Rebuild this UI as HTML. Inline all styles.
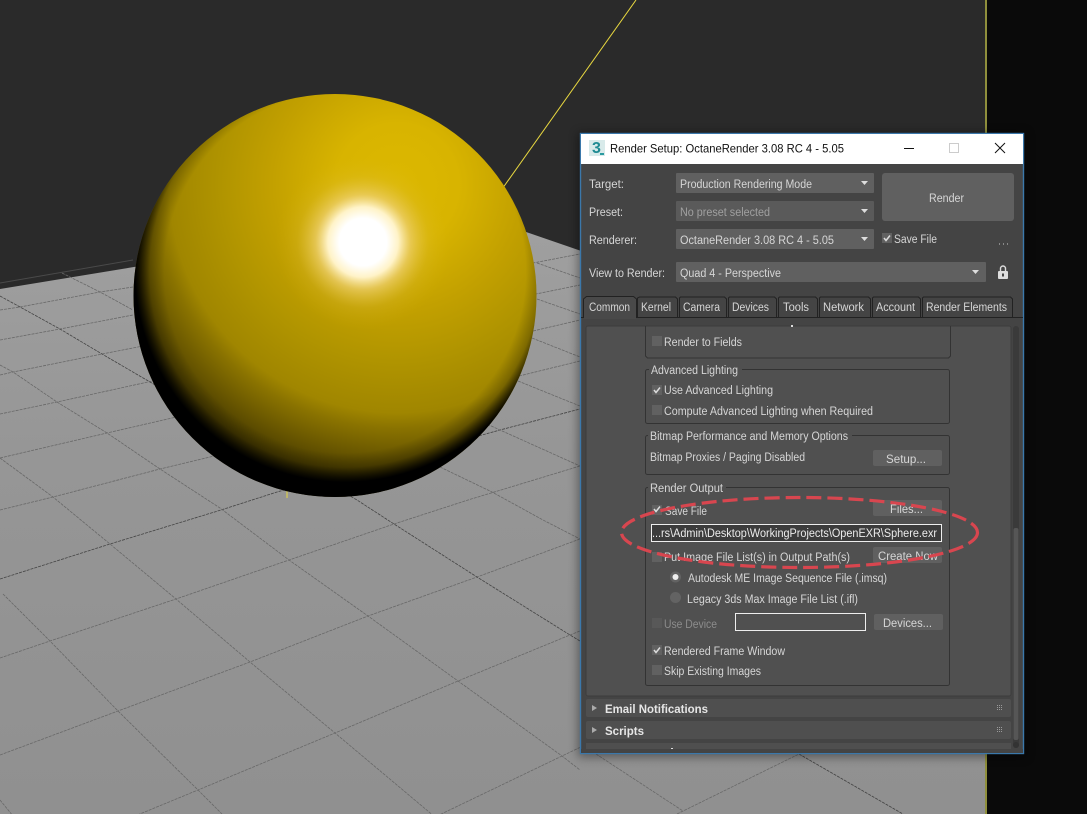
<!DOCTYPE html>
<html><head><meta charset="utf-8"><style>
html,body{margin:0;padding:0;background:#0a0a0a;width:1087px;height:814px;overflow:hidden}
svg{display:block}
text{font-family:"Liberation Sans",sans-serif;font-size:11.5px;fill:#d6d6d6}
.b{font-weight:bold;fill:#e6e6e6}
.g{fill:#a0a0a0}
.k{fill:#111;font-size:12px}
.u{fill:none;stroke:#686868;stroke-width:.8;stroke-dasharray:3 1}
.d{fill:none;stroke:#444;stroke-width:.8;stroke-dasharray:3 1}
.grp{fill:none;stroke:#333;stroke-width:1}
.cb{fill:#616161}
.btn{fill:#606060}
.rl{fill:#4f4f4f}
</style></head><body>
<svg width="1087" height="814" viewBox="0 0 1087 814" xmlns="http://www.w3.org/2000/svg">
<defs>
<radialGradient id="base" gradientUnits="userSpaceOnUse" cx="397" cy="185" r="340">
<stop offset="0" stop-color="#dcb800"/><stop offset=".18" stop-color="#d8b400"/><stop offset=".37" stop-color="#c2a000"/><stop offset=".52" stop-color="#b09400"/><stop offset=".67" stop-color="#a08600"/><stop offset=".715" stop-color="#8a7300"/><stop offset=".8" stop-color="#685600"/><stop offset=".88" stop-color="#463a00"/><stop offset="1" stop-color="#2c2400"/>
</radialGradient>
<radialGradient id="edge" gradientUnits="userSpaceOnUse" cx="345" cy="272" r="210">
<stop offset=".86" stop-color="#000" stop-opacity="0"/><stop offset=".93" stop-color="#000" stop-opacity=".25"/><stop offset=".98" stop-color="#000" stop-opacity=".8"/><stop offset="1" stop-color="#000" stop-opacity="1"/>
</radialGradient>
<radialGradient id="spec" gradientUnits="userSpaceOnUse" cx="363" cy="242" r="88">
<stop offset="0" stop-color="#fff"/><stop offset=".27" stop-color="#fff"/><stop offset=".4" stop-color="#fff3c8"/><stop offset=".54" stop-color="#eed070" stop-opacity=".72"/><stop offset=".75" stop-color="#e0c040" stop-opacity=".2"/><stop offset="1" stop-color="#d8b400" stop-opacity="0"/>
</radialGradient>
<linearGradient id="floor" x1="0" y1="0" x2="0" y2="1">
<stop offset="0" stop-color="#a0a0a0"/><stop offset=".4" stop-color="#969696"/><stop offset="1" stop-color="#909090"/>
</linearGradient>
<filter id="sh" x="-10%" y="-10%" width="120%" height="120%"><feGaussianBlur stdDeviation="5"/></filter>
</defs>

<!-- viewport -->
<rect width="1087" height="814" fill="#0a0a0a"/>
<rect width="985" height="814" fill="#2a2a2a"/>
<polygon points="0,289 468,212 985,390 985,814 0,814" fill="url(#floor)"/>
<line x1="0" y1="283" x2="133" y2="260" stroke="#4a4a4a" stroke-width="1"/>
<rect x="985" y="0" width="2" height="814" fill="#8f8f3c"/>
<line x1="636" y1="0" x2="500" y2="192" stroke="#e8d840" stroke-width="1"/>

<!-- grid: up-right -->
<polyline class="u" points="0,310 20,307 100,292 133,287"/>
<polyline class="u" points="0,340 60,329 133,315"/>
<polyline class="u" points="0,375 13,372 102,354 138,347 533,263 580,254"/>
<polyline class="u" points="0,414 57,402 148,382 536,294 580,285"/>
<polyline class="u" points="0,458 107,433 172,418 533,331 580,320"/>
<polyline class="u" points="0,510 53,497 160,469 210,457 519,376 580,361"/>
<polyline class="d" points="0,579 110,544 221,510 277,492 500,430 580,409"/>
<polyline class="u" points="0,658 50,641 176,599 289,560 394,524 468,500 580,466"/>
<polyline class="u" points="0,755 118,711 250,662 368,616 477,577 580,539"/>
<polyline class="u" points="60,847 198,790 335,733 458,681 570,635 585,629"/>
<polyline class="u" points="368,848 435,817 562,756 585,745"/>
<polyline class="u" points="677,814 799,754"/>
<!-- grid: down-right -->
<polyline class="u" points="62,273 100,292 133,310"/>
<polyline class="d" points="0,296 20,307 60,329 102,354 150,382 357,500 394,524 477,577 570,635 585,644"/>
<polyline class="u" points="0,365 13,372 57,402 107,433 160,469 220,508 289,560 368,616 458,681 562,756 580,770"/>
<polyline class="u" points="0,458 53,497 110,544 176,599 250,662 335,733 435,817"/>
<polyline class="u" points="3,594 50,641 118,711 198,790 222,814"/>
<polyline class="u" points="0,800 39,848"/>
<polyline class="u" points="537,263 580,278"/>
<polyline class="u" points="537,299 580,314"/>
<polyline class="u" points="532,338 580,357"/>
<polyline class="u" points="518,381 580,406"/>
<polyline class="u" points="480,421 500,430 580,466"/>
<polyline class="u" points="440,467 492,492 543,520 580,539"/>
<polyline class="u" points="596,754 683,811"/>
<polyline class="d" points="799,754 903,814"/>
<line x1="287" y1="491" x2="287" y2="498" stroke="#e8d840" stroke-width="1"/>

<!-- sphere -->
<circle cx="335" cy="295.500" r="201.500" fill="url(#base)"/>
<circle cx="335" cy="295.500" r="201.500" fill="url(#edge)"/>
<circle cx="363" cy="242" r="88" fill="url(#spec)"/>

<!-- dialog shadow -->
<rect x="578" y="133" width="448" height="624" fill="#000" opacity=".4" filter="url(#sh)"/>

<!-- dialog -->
<rect x="580.500" y="133.500" width="443" height="620" fill="#444" stroke="#3b78ab" stroke-width="1.400"/>
<rect x="581" y="134" width="442" height="30" fill="#fff"/>
<!-- app icon -->
<rect x="589" y="140" width="16" height="16" fill="#d8eaea"/>
<text x="592" y="153" style="font-size:16px;font-weight:bold;fill:#1e8a92">3</text>
<rect x="600" y="153" width="4" height="2" fill="#2a9aa0"/>
<text class="k" x="610" y="152.500" textLength="234" lengthAdjust="spacingAndGlyphs">Render Setup: OctaneRender 3.08 RC 4 - 5.05</text>
<line x1="904" y1="148.500" x2="914" y2="148.500" stroke="#111"/>
<rect x="949.500" y="143.500" width="9" height="9" fill="none" stroke="#ccc"/>
<path d="M995 143 L1005 153 M1005 143 L995 153" stroke="#111" stroke-width="1" fill="none"/>

<!-- top controls -->
<text x="589" y="188" textLength="35" lengthAdjust="spacingAndGlyphs">Target:</text>
<text x="589" y="216" textLength="34" lengthAdjust="spacingAndGlyphs">Preset:</text>
<text x="589" y="244" textLength="48" lengthAdjust="spacingAndGlyphs">Renderer:</text>
<text x="589" y="277" textLength="76" lengthAdjust="spacingAndGlyphs">View to Render:</text>

<rect class="btn" x="676" y="173" width="198" height="20" rx="1"/>
<rect x="676" y="201" width="198" height="20" rx="1" fill="#5a5a5a"/>
<rect class="btn" x="676" y="229" width="198" height="20" rx="1"/>
<rect class="btn" x="676" y="262" width="310" height="20" rx="1"/>
<text x="680" y="188" textLength="132" lengthAdjust="spacingAndGlyphs">Production Rendering Mode</text>
<text class="g" x="680" y="216" textLength="90" lengthAdjust="spacingAndGlyphs">No preset selected</text>
<text x="680" y="244" textLength="154" lengthAdjust="spacingAndGlyphs">OctaneRender 3.08 RC 4 - 5.05</text>
<text x="680" y="277" textLength="101" lengthAdjust="spacingAndGlyphs">Quad 4 - Perspective</text>
<path d="M861 181h7l-3.500 4z M861 209h7l-3.500 4z M861 237h7l-3.500 4z M972 270h7l-3.500 4z" fill="#ddd"/>

<rect class="btn" x="882" y="173" width="132" height="48" rx="3"/>
<text x="929" y="202" textLength="35" lengthAdjust="spacingAndGlyphs">Render</text>
<rect class="cb" x="882" y="233" width="10" height="10"/>
<path d="M884 238l2 2.500 4-5" stroke="#dcdcdc" stroke-width="1.500" fill="none"/>
<text x="894" y="243" textLength="43" lengthAdjust="spacingAndGlyphs">Save File</text>
<path d="M999 244h1M1003 244h1M1007 244h1" stroke="#ccc" stroke-width="1" fill="none"/>
<!-- lock -->
<path d="M1000.500 271v-2.500a2.500 2.500 0 0 1 5 0v2.500" stroke="#ddd" stroke-width="1.400" fill="none"/>
<rect x="998" y="271" width="10" height="8" rx="1" fill="#ddd"/>
<rect x="1002" y="273.500" width="2" height="3" fill="#444"/>

<!-- tabs -->
<line x1="581" y1="317.500" x2="1023" y2="317.500" stroke="#222"/>
<g fill="#444" stroke="#222" stroke-width="1">
<path d="M637.500 317v-19l2-1h36l2 2v18"/>
<path d="M679.500 317v-19l1-1h44l2 2v18"/>
<path d="M728.500 317v-19l1-1h45l2 2v18"/>
<path d="M778.500 317v-19l1-1h36l2 2v18"/>
<path d="M819.500 317v-19l1-1h48l2 2v18"/>
<path d="M872.500 317v-19l1-1h45l2 2v18"/>
<path d="M922.500 317v-19l1-1h87l2 2v18"/>
<path d="M583.500 318v-19l3-2.500h47l3 2.500v19" fill="#494949"/>
</g>
<rect x="584" y="316" width="52" height="3" fill="#494949"/>
<text x="589" y="311" textLength="41" lengthAdjust="spacingAndGlyphs">Common</text>
<text x="641" y="311" textLength="30" lengthAdjust="spacingAndGlyphs">Kernel</text>
<text x="683" y="311" textLength="37" lengthAdjust="spacingAndGlyphs">Camera</text>
<text x="732" y="311" textLength="37" lengthAdjust="spacingAndGlyphs">Devices</text>
<text x="783" y="311" textLength="26" lengthAdjust="spacingAndGlyphs">Tools</text>
<text x="823" y="311" textLength="41" lengthAdjust="spacingAndGlyphs">Network</text>
<text x="876" y="311" textLength="39" lengthAdjust="spacingAndGlyphs">Account</text>
<text x="926" y="311" textLength="81" lengthAdjust="spacingAndGlyphs">Render Elements</text>

<!-- content panel -->
<rect x="586" y="326" width="425" height="370" rx="2" fill="#505050" stroke="#3d3d3d"/>
<rect x="1013" y="326" width="6" height="422" rx="3" fill="#3a3a3a"/>
<rect x="1013.500" y="528" width="5" height="212" rx="2" fill="#565656"/>
<circle cx="1016" cy="745" r="3" fill="#333"/>

<!-- groups -->
<path class="grp" d="M645.500 326v30l2 2h301l2-2v-30"/>
<rect x="791" y="325" width="2" height="2" fill="#ddd"/>
<rect class="grp" x="645.500" y="369.500" width="304" height="54" rx="2"/>
<rect class="grp" x="645.500" y="435.500" width="304" height="39" rx="2"/>
<rect class="grp" x="645.500" y="487.500" width="304" height="198" rx="2"/>
<rect x="649" y="366" width="93" height="8" fill="#505050"/>
<rect x="648" y="432" width="204" height="8" fill="#505050"/>
<rect x="648" y="484" width="78" height="8" fill="#505050"/>

<rect class="cb" x="652" y="336" width="10" height="10"/>
<text x="664" y="346" textLength="78" lengthAdjust="spacingAndGlyphs">Render to Fields</text>
<text x="651" y="374" textLength="87" lengthAdjust="spacingAndGlyphs">Advanced Lighting</text>
<rect class="cb" x="652" y="385" width="10" height="10"/>
<path d="M654 390l2 2.500 4-5" stroke="#dcdcdc" stroke-width="1.500" fill="none"/>
<text x="664" y="394" textLength="109" lengthAdjust="spacingAndGlyphs">Use Advanced Lighting</text>
<rect class="cb" x="652" y="405" width="10" height="10"/>
<text x="664" y="415" textLength="209" lengthAdjust="spacingAndGlyphs">Compute Advanced Lighting when Required</text>

<text x="650" y="440" textLength="198" lengthAdjust="spacingAndGlyphs">Bitmap Performance and Memory Options</text>
<text x="650" y="461" textLength="155" lengthAdjust="spacingAndGlyphs">Bitmap Proxies / Paging Disabled</text>
<rect class="btn" x="873" y="450" width="69" height="16" rx="2"/>
<text x="886" y="463" textLength="40" lengthAdjust="spacingAndGlyphs">Setup...</text>

<text x="650" y="492" textLength="73" lengthAdjust="spacingAndGlyphs">Render Output</text>
<rect class="cb" x="652" y="505" width="10" height="10"/>
<path d="M654 509l2 2.500 4-5" stroke="#dcdcdc" stroke-width="1.500" fill="none"/>
<text x="665" y="515" textLength="42" lengthAdjust="spacingAndGlyphs">Save File</text>
<rect class="btn" x="873" y="500" width="69" height="16" rx="2"/>
<text x="890" y="513" textLength="33" lengthAdjust="spacingAndGlyphs">Files...</text>

<rect x="651.500" y="524.500" width="290" height="17" fill="#3c3c3c" stroke="#eee"/>
<text x="652" y="537" textLength="285" lengthAdjust="spacingAndGlyphs" style="fill:#ececec">...rs\Admin\Desktop\WorkingProjects\OpenEXR\Sphere.exr</text>

<rect class="cb" x="652" y="552" width="10" height="10"/>
<text x="664" y="561" textLength="186" lengthAdjust="spacingAndGlyphs">Put Image File List(s) in Output Path(s)</text>
<rect class="btn" x="873" y="547" width="69" height="16" rx="2"/>
<text x="878" y="560" textLength="60" lengthAdjust="spacingAndGlyphs">Create Now</text>

<circle cx="675.500" cy="577" r="5.500" fill="#636363"/>
<circle cx="675.500" cy="577" r="3" fill="#eee"/>
<text x="688" y="582" textLength="199" lengthAdjust="spacingAndGlyphs">Autodesk ME Image Sequence File (.imsq)</text>
<circle cx="675.500" cy="597.500" r="5.500" fill="#636363"/>
<text x="687" y="603" textLength="171" lengthAdjust="spacingAndGlyphs">Legacy 3ds Max Image File List (.ifl)</text>

<rect x="652" y="618" width="10" height="10" fill="#585858"/>
<text class="g" x="664" y="628" textLength="53" lengthAdjust="spacingAndGlyphs" style="fill:#8c8c8c">Use Device</text>
<rect x="735.500" y="613.500" width="130" height="17" fill="#505050" stroke="#eee"/>
<rect class="btn" x="874" y="614" width="69" height="16" rx="2"/>
<text x="883" y="627" textLength="49" lengthAdjust="spacingAndGlyphs">Devices...</text>

<rect class="cb" x="652" y="645" width="10" height="10"/>
<path d="M654 650l2 2.500 4-5" stroke="#dcdcdc" stroke-width="1.500" fill="none"/>
<text x="664" y="655" textLength="121" lengthAdjust="spacingAndGlyphs">Rendered Frame Window</text>
<rect class="cb" x="652" y="665" width="10" height="10"/>
<text x="664" y="675" textLength="97" lengthAdjust="spacingAndGlyphs">Skip Existing Images</text>

<!-- rollups -->
<rect class="rl" x="586" y="699" width="425" height="18" rx="2"/>
<rect class="rl" x="586" y="721" width="425" height="18" rx="2"/>
<rect class="rl" x="586" y="743" width="425" height="6"/>
<path d="M592 705l5 3-5 3z M592 727l5 3-5 3z" fill="#aaa"/>
<text class="b" x="605" y="713" textLength="103" lengthAdjust="spacingAndGlyphs">Email Notifications</text>
<text class="b" x="605" y="735" textLength="39" lengthAdjust="spacingAndGlyphs">Scripts</text>
<g fill="#9a9a9a">
<rect x="997" y="705" width="1" height="1"/><rect x="999" y="705" width="1" height="1"/><rect x="1001" y="705" width="1" height="1"/>
<rect x="997" y="707" width="1" height="1"/><rect x="999" y="707" width="1" height="1"/><rect x="1001" y="707" width="1" height="1"/>
<rect x="997" y="709" width="1" height="1"/><rect x="999" y="709" width="1" height="1"/><rect x="1001" y="709" width="1" height="1"/>
<rect x="997" y="727" width="1" height="1"/><rect x="999" y="727" width="1" height="1"/><rect x="1001" y="727" width="1" height="1"/>
<rect x="997" y="729" width="1" height="1"/><rect x="999" y="729" width="1" height="1"/><rect x="1001" y="729" width="1" height="1"/>
<rect x="997" y="731" width="1" height="1"/><rect x="999" y="731" width="1" height="1"/><rect x="1001" y="731" width="1" height="1"/>
</g>
<rect x="671" y="748" width="2" height="1" fill="#ddd"/>
<rect x="581" y="749" width="442" height="4" fill="#444"/>

<!-- annotation -->
<ellipse cx="799.500" cy="532.500" rx="178" ry="35" fill="none" stroke="#d8464f" stroke-width="3.200" stroke-dasharray="15 6"/>
</svg>
</body></html>
